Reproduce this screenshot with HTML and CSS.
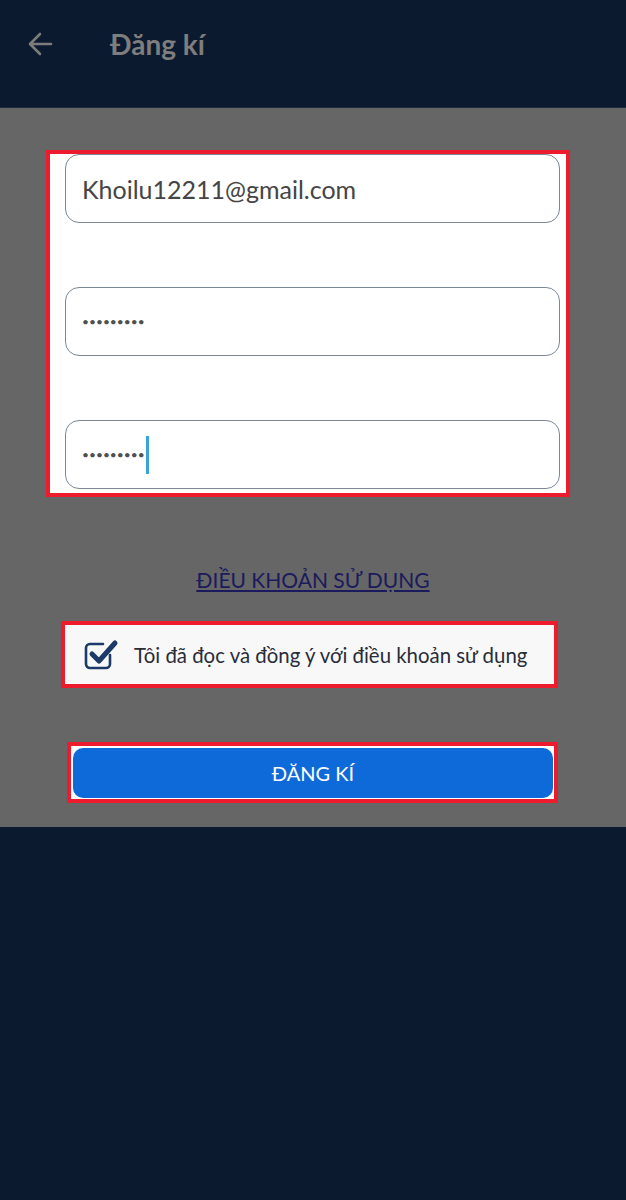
FILE: index.html
```html
<!DOCTYPE html>
<html lang="vi">
  <head>
    <meta charset="UTF-8" />
    <meta name="viewport" content="width=device-width, initial-scale=1.0" />
    <title>Đăng kí</title>
    <link rel="stylesheet" href="styles.css">
  </head>
  <body>
    <!-- Top Bar -->
    <header class="topbar">
      <svg class="back-icon" width="26" height="26" viewBox="0 0 26 26">
        <path d="M24 13H3M13 3L3 13l10 10" fill="none" stroke="#7c7c7c" stroke-width="2.6" stroke-linecap="round" stroke-linejoin="round" />
      </svg>
      <h1 class="title">Đăng kí</h1>
    </header>

    <!-- Register Form -->
    <main class="content">
      <div class="mark form-box">
        <div class="field">Khoilu12211@gmail.com</div>
        <div class="field"><span class="dots">•••••••••</span></div>
        <div class="field"><span class="dots">•••••••••</span><span class="caret"></span></div>
      </div>

      <a class="terms-link" href="#">ĐIỀU KHOẢN SỬ DỤNG</a>

      <div class="mark agree-box">
        <svg class="check-icon" width="36" height="32" viewBox="0 0 36 32">
          <path d="M26 16v9a4 4 0 0 1-4 4H6a4 4 0 0 1-4-4V9a4 4 0 0 1 4-4h13" fill="none" stroke="#1c3a68" stroke-width="2.6" stroke-linecap="round" />
          <path d="M8 15l7 7L31 4" fill="none" stroke="#1c3a68" stroke-width="5" stroke-linecap="round" stroke-linejoin="round" />
        </svg>
        <span class="agree-text">Tôi đã đọc và đồng ý với điều khoản sử dụng</span>
      </div>

      <div class="mark btn-box">
        <button class="btn">ĐĂNG KÍ</button>
      </div>
    </main>

    <footer class="bottom"></footer>
  </body>
</html>
```

FILE: styles.css
```css
/* General Styling */
body {
  margin: 0;
  padding: 0;
  font-family: "Comic Sans MS", Lato, "Noto Sans", sans-serif;
  background-color: #0c1a30;
  overflow: hidden;
}

/* Top Bar */
.topbar {
  height: 108px;
  display: flex;
  align-items: center;
  padding-left: 27px;
  box-sizing: border-box;
  background-color: #0c1a30;
  border-bottom: 1px solid #1e2a3c;
}

.back-icon {
  margin-top: -20px;
}

.title {
  margin: -20px 0 0 57px;
  font-size: 28px;
  font-weight: bold;
  color: #7e7e7e;
}

/* Gray Area */
.content {
  height: 719px;
  background-color: #666666;
  display: flex;
  flex-direction: column;
  padding-top: 42px;
  box-sizing: border-box;
}

.mark {
  border: 4px solid #ec1b2d;
  box-sizing: border-box;
}

/* Inputs */
.form-box {
  margin-left: 46px;
  width: 524px;
  background-color: #ffffff;
  padding: 0 6px 4px 15px;
  display: flex;
  flex-direction: column;
  gap: 64px;
}

.field {
  height: 69px;
  border: 1px solid #7b8794;
  border-radius: 14px;
  box-sizing: border-box;
  display: flex;
  align-items: center;
  padding-left: 16px;
  font-size: 25px;
  color: #454545;
}

.dots {
  font-size: 12px;
  letter-spacing: 0;
  color: #505050;
}

.caret {
  width: 3px;
  height: 38px;
  margin-left: 1px;
  background-color: #38a4dc;
}

/* Terms */
.terms-link {
  align-self: center;
  margin-top: 71px;
  font-size: 21px;
  line-height: 24px;
  color: #1a1a5c;
  text-decoration: underline;
}

.agree-box {
  margin: 29px 0 0 61px;
  width: 497px;
  height: 67px;
  background-color: #f8f8f8;
  display: flex;
  align-items: center;
  padding-left: 19px;
}

.check-icon {
  flex-shrink: 0;
}

.agree-text {
  margin-left: 14px;
  font-size: 20.4px;
  color: #2a2c38;
}

/* Button */
.btn-box {
  margin: 54px 0 0 67px;
  width: 491px;
  height: 61px;
  padding: 2px 1px 1px 2px;
  background-color: #ffffff;
}

.btn {
  width: 100%;
  height: 100%;
  border: none;
  border-radius: 10px;
  background-color: #0f6ad9;
  color: #ffffff;
  font-family: inherit;
  font-size: 20px;
}

.bottom {
  height: 373px;
  background-color: #0c1a30;
}
```
